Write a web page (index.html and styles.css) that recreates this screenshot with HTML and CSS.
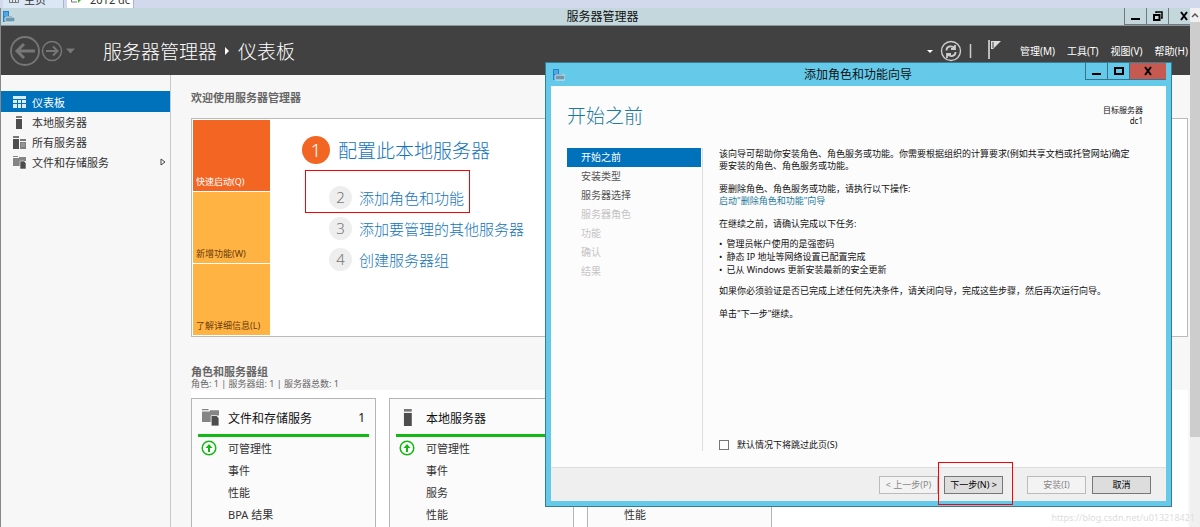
FILE: index.html
```html
<!DOCTYPE html>
<html lang="zh-CN">
<head>
  <meta charset="UTF-8" />
  <title>服务器管理器</title>
  <link rel="stylesheet" href="styles.css">
</head>
<body>

  <svg width="0" height="0" class="sprite">
    <symbol id="i-app" viewBox="0 0 12 12">
      <path d="M0 0h6v11H0z" fill="#1d84d0"/>
      <path d="M1 2h4M1 4h4" stroke="#8cc8f0"/>
      <path d="M5 5h4v2H5z" fill="#5b7f93"/>
      <rect x="2" y="6" width="10" height="5" rx="1" fill="#6f99af" stroke="#d8e8ef"/>
    </symbol>
    <symbol id="i-board" viewBox="0 0 13 12">
      <path d="M0 0h13v3H0zM0 4h4v3H0zM5 4h3v3H5zM9 4h4v3H9zM0 8h4v4H0zM5 8h3v4H5zM9 8h4v4H9z" fill="#d9ecf8"/>
    </symbol>
    <symbol id="i-server" viewBox="0 0 13 13">
      <path d="M3 0h6v2H3z" fill="#777"/>
      <path d="M3 3h6v10H3z" fill="#4d4d4d"/>
    </symbol>
    <symbol id="i-servers" viewBox="0 0 13 13">
      <path d="M0 0h6v2H0zM7 3h6v2H7z" fill="#777"/>
      <path d="M0 3h6v10H0z" fill="#4d4d4d"/>
      <path d="M7 6h6v7H7z" fill="#808080"/>
      <path d="M8 8h4M8 10h4" stroke="#aaa"/>
    </symbol>
    <symbol id="i-files" viewBox="0 0 13 13">
      <path d="M0 0h5v1H0zM0 2h6V1h7v4H8v5H0z" fill="#858585"/>
      <path d="M7 5h4l2 2v6H7z" fill="#4d4d4d" stroke="#f7f7f7" stroke-width=".6"/>
    </symbol>
    <symbol id="i-up" viewBox="0 0 16 16">
      <circle cx="8" cy="8" r="6.8" fill="#fff" stroke="#14b814" stroke-width="1.5"/>
      <path d="M8 12V6" stroke="#14b814" stroke-width="2"/>
      <path d="M8 4l3.500 4h-7z" fill="#14b814"/>
    </symbol>
  </svg>

  <div class="tabs">
    <div class="tab">
      <svg width="10" height="10" viewBox="0 0 10 10"><path d="M.5 0v9.500h9V0M3.500 0v9M6.500 0v9" fill="none" stroke="#777"/></svg>
      <span>主页</span>
    </div>
    <div class="tab active">
      <svg width="14" height="11" viewBox="0 0 14 11"><path d="M.5 0v10H6" fill="none" stroke="#777"/><path d="M7 0l6 5-6 6z" fill="#3cb52e"/></svg>
      <span>2012 dc</span>
    </div>
  </div>

  <div class="viewer">
    <div class="screen">
      <header class="titlebar">
        <svg class="app-icon" width="12" height="12"><use href="#i-app"/></svg>
        <span class="title">服务器管理器</span>
        <div class="win-buttons">
          <button aria-label="最小化"><svg width="10" height="10"><path d="M0 8h9" stroke="#000" stroke-width="2"/></svg></button>
          <button aria-label="还原"><svg width="10" height="10"><path d="M3 2V1h6v6H8" fill="none" stroke="#000" stroke-width="1.500"/><path d="M1 4h5.500v5H1z" fill="none" stroke="#000" stroke-width="2"/></svg></button>
          <button class="last" aria-label="关闭"><svg width="10" height="10"><path d="M2 1l6 8M8 1L2 9" stroke="#000" stroke-width="2"/></svg></button>
        </div>
      </header>

      <div class="toolbar">
        <svg class="back" width="66" height="30" viewBox="0 0 66 30" fill="none" stroke="#777">
          <circle cx="15" cy="15" r="14" stroke-width="1.800"/>
          <path d="M25 15H7M14 8l-7 7 7 7" stroke-width="3"/>
          <circle cx="42" cy="15" r="9.500" stroke-width="1.500"/>
          <path d="M36 15h11M43 10.500l4.500 4.500-4.500 4.500" stroke-width="2"/>
          <path d="M56 12.500h9l-4.500 5z" fill="#777" stroke="none"/>
        </svg>
        <div class="crumbs">
          <span>服务器管理器</span>
          <svg width="5" height="8"><path d="M0 0l4 4-4 4z" fill="#fff"/></svg>
          <span>仪表板</span>
        </div>
        <svg class="status" width="74" height="24" viewBox="0 0 74 24" fill="none">
          <path d="M0 11h6l-3 3z" fill="#fff"/>
          <circle cx="24" cy="12" r="9.500" stroke="#ccc" stroke-width="1.400"/>
          <path d="M19.500 11.500c0-5 6-5 8.500-2M28 6v4h-4M28.500 13c0 5-6 5-8.500 2M20 19v-4h4" stroke="#ccc" stroke-width="1.800"/>
          <path d="M43.500 5v14" stroke="#ccc" stroke-width="1.500"/>
          <path d="M61 1h2v19h-2z" fill="#bbb"/>
          <path d="M64 2h10l-8 8h-2z" fill="#ddd"/>
          <path d="M66 3v6" stroke="#414141"/>
        </svg>
        <nav class="menu">
          <a href="#">管理(M)</a>
          <a href="#">工具(T)</a>
          <a href="#">视图(V)</a>
          <a href="#">帮助(H)</a>
        </nav>
      </div>

      <div class="columns">
        <nav class="sidebar">
          <a href="#" class="selected"><svg width="13" height="12"><use href="#i-board"/></svg>仪表板</a>
          <a href="#"><svg width="13" height="13"><use href="#i-server"/></svg>本地服务器</a>
          <a href="#"><svg width="13" height="13"><use href="#i-servers"/></svg>所有服务器</a>
          <a href="#"><svg width="13" height="13"><use href="#i-files"/></svg>文件和存储服务
            <svg class="more" width="6" height="8"><path d="M1 1l4 3-4 3z" fill="none" stroke="#444"/></svg></a>
        </nav>

        <main>
          <h2>欢迎使用服务器管理器</h2>
          <section class="welcome">
            <div class="quick">
              <a href="#" class="start">快速启动(Q)</a>
              <a href="#">新增功能(W)</a>
              <a href="#">了解详细信息(L)</a>
            </div>
            <div class="steps">
              <a href="#" class="step first"><b>1</b>配置此本地服务器</a>
              <a href="#" class="step marked"><b>2</b>添加角色和功能</a>
              <a href="#" class="step"><b>3</b>添加要管理的其他服务器</a>
              <a href="#" class="step"><b>4</b>创建服务器组</a>
            </div>
          </section>

          <h2 class="groups-title">角色和服务器组</h2>
          <p class="counts">角色: 1 | 服务器组: 1 | 服务器总数: 1</p>
          <section class="tiles">
            <article class="tile">
              <h3><svg width="17" height="17"><use href="#i-files"/></svg>文件和存储服务<span>1</span></h3>
              <ul>
                <li><svg width="16" height="16"><use href="#i-up"/></svg>可管理性</li>
                <li>事件</li>
                <li>性能</li>
                <li>BPA 结果</li>
              </ul>
            </article>
            <article class="tile">
              <h3><svg width="17" height="17"><use href="#i-server"/></svg>本地服务器<span>1</span></h3>
              <ul>
                <li><svg width="16" height="16"><use href="#i-up"/></svg>可管理性</li>
                <li>事件</li>
                <li>服务</li>
                <li>性能</li>
              </ul>
            </article>
            <article class="tile">
              <h3><svg width="17" height="17"><use href="#i-servers"/></svg>所有服务器<span>1</span></h3>
              <ul>
                <li><svg width="16" height="16"><use href="#i-up"/></svg>可管理性</li>
                <li>事件</li>
                <li>服务</li>
                <li>性能</li>
              </ul>
            </article>
          </section>
        </main>
      </div>

      <div class="wizard" role="dialog" aria-labelledby="wizard-title">
        <header class="wizard-bar">
          <svg class="app-icon" width="12" height="12"><use href="#i-app"/></svg>
          <span class="title" id="wizard-title">添加角色和功能向导</span>
          <div class="win-buttons">
            <button aria-label="最小化"><svg width="10" height="10"><path d="M0 8h9" stroke="#000" stroke-width="2"/></svg></button>
            <button aria-label="最大化"><svg width="10" height="10"><path d="M1 2h8v6H1z" fill="none" stroke="#000" stroke-width="2"/></svg></button>
            <button class="close" aria-label="关闭"><svg width="10" height="10"><path d="M2 1l6 8M8 1L2 9" stroke="#000" stroke-width="2"/></svg></button>
          </div>
        </header>

        <div class="wizard-body">
          <div class="wizard-head">
            <h1>开始之前</h1>
            <p>目标服务器<br>dc1</p>
          </div>
          <div class="wizard-columns">
            <ol class="pages">
              <li class="current">开始之前</li>
              <li>安装类型</li>
              <li>服务器选择</li>
              <li class="off">服务器角色</li>
              <li class="off">功能</li>
              <li class="off">确认</li>
              <li class="off">结果</li>
            </ol>
            <div class="text">
              <p>该向导可帮助你安装角色、角色服务或功能。你需要根据组织的计算要求(例如共享文档或托管网站)确定<br>要安装的角色、角色服务或功能。</p>
              <p>要删除角色、角色服务或功能，请执行以下操作:<br><a href="#">启动"删除角色和功能"向导</a></p>
              <p>在继续之前，请确认完成以下任务:</p>
              <ul>
                <li>管理员帐户使用的是强密码</li>
                <li>静态 IP 地址等网络设置已配置完成</li>
                <li>已从 Windows 更新安装最新的安全更新</li>
              </ul>
              <p>如果你必须验证是否已完成上述任何先决条件，请关闭向导，完成这些步骤，然后再次运行向导。</p>
              <p>单击"下一步"继续。</p>
              <div class="skip">
                <input type="checkbox" id="skip">
                <label for="skip">默认情况下将跳过此页(S)</label>
              </div>
            </div>
          </div>
        </div>

        <footer class="actions">
          <button disabled>&lt; 上一步(P)</button>
          <div class="next"><button>下一步(N) &gt;</button></div>
          <button class="install" disabled>安装(I)</button>
          <button>取消</button>
        </footer>
      </div>
    </div>

    <div class="scrollbar">
      <svg width="10" height="14"><path d="M2 9l3-3 3 3" fill="none" stroke="#555" stroke-width="1.500"/></svg>
      <div class="thumb"></div>
    </div>
  </div>

  <div class="watermark">https://blog.csdn.net/u013218421</div>

</body>
</html>
```
FILE: styles.css
```css
* {
  box-sizing: border-box;
}

body {
  margin: 0;
  height: 100vh;
  overflow: hidden;
  display: flex;
  flex-direction: column;
  font-family: "Noto Sans", "Noto Sans CJK SC", sans-serif;
  font-size: 11px;
  color: #333;
  background-color: #fff;
}

h1, h2, h3, p, ul, ol {
  margin: 0;
  padding: 0;
}

ul, ol {
  list-style: none;
}

a {
  text-decoration: none;
  color: inherit;
}

button {
  font-family: inherit;
  padding: 0;
}

svg {
  flex: none;
}

.sprite {
  position: absolute;
}

/* tabs of the virtual machine viewer */
.tabs {
  flex: none;
  display: flex;
  height: 8px;
  padding-left: 3px;
  background-color: #d3d9ec;
  overflow: hidden;
}

.tab {
  display: flex;
  align-items: flex-end;
  gap: 5px;
  width: 61px;
  padding-left: 6px;
  padding-bottom: 5px;
  line-height: 12px;
  background-color: #dce7f5;
  border-right: 1px solid #a9b5cc;
}

.tab span {
  height: 9px;
}

.tab.active {
  width: 67px;
  margin-left: 3px;
  padding-left: 4px;
  background-color: #fff;
}

.viewer {
  flex: 1;
  min-height: 0;
  display: flex;
}

.screen {
  position: relative;
  flex: 1;
  min-width: 0;
  display: flex;
  flex-direction: column;
  border-left: 1px solid #888;
  overflow: hidden;
}

.titlebar {
  flex: none;
  display: flex;
  align-items: center;
  height: 18px;
  background-color: #c3d7dc;
  border-bottom: 1px solid #8b9799;
}

.app-icon {
  margin-left: 2px;
}

.title {
  flex: 1;
  padding-left: 66px;
  text-align: center;
  font-size: 12px;
  line-height: 18px;
  color: #111;
}

.win-buttons {
  display: flex;
  align-self: flex-start;
}

.win-buttons button {
  display: flex;
  align-items: center;
  justify-content: center;
  width: 22px;
  height: 17px;
  background: none;
  border: 1px solid #6d797c;
  border-width: 0 0 1px 1px;
}

.win-buttons .last {
  padding-left: 8px;
}

.toolbar {
  flex: none;
  display: flex;
  align-items: center;
  height: 49px;
  padding: 0 2px 0 9px;
  background-color: #414141;
  color: #fff;
}

.crumbs {
  flex: 1;
  display: flex;
  align-items: center;
  gap: 8px;
  margin-left: 27px;
  font-size: 19px;
  font-weight: 300;
}

.menu {
  display: flex;
  gap: 12px;
  margin-left: 19px;
  font-size: 10px;
}

.columns {
  flex: 1;
  min-height: 0;
  display: flex;
}

.sidebar {
  flex: none;
  width: 170px;
  padding-top: 16px;
  background-color: #f7f7f7;
  border-right: 1px solid #c8c8c8;
}

.sidebar a {
  display: flex;
  align-items: center;
  gap: 6px;
  height: 20px;
  padding: 0 4px 0 12px;
}

.sidebar .selected {
  height: 21px;
  background-color: #0072bc;
  color: #fff;
}

.more {
  margin-left: auto;
}

main {
  flex: 1;
  min-width: 0;
  padding: 13px 2px 0 20px;
  background-color: #f7f7f7;
}

h2 {
  font-size: 11px;
  line-height: 20px;
  font-weight: 700;
  color: #666;
}

.welcome {
  display: flex;
  margin-top: 10px;
  padding: 1px;
  background-color: #fff;
  border: 1px solid #bbb;
}

.quick {
  display: flex;
  flex-direction: column;
  gap: 1px;
  width: 77px;
}

.quick a {
  display: flex;
  align-items: flex-end;
  height: 71px;
  padding: 0 3px 3px;
  font-size: 9px;
  background-color: #ffb343;
  color: #6b3a0a;
}

.quick .start {
  background-color: #f26522;
  color: #fff;
}

.steps {
  display: flex;
  flex-direction: column;
  align-items: flex-start;
  padding: 10px 0 0 32px;
}

.step {
  position: relative;
  display: flex;
  align-items: center;
  gap: 7px;
  height: 31px;
  margin-left: 27px;
  font-size: 15px;
  font-weight: 300;
  color: #1474bb;
}

.step b {
  width: 23px;
  height: 23px;
  border-radius: 50%;
  text-align: center;
  line-height: 23px;
  font-weight: 300;
  background-color: #eee;
  color: #777;
}

.step.first {
  gap: 8px;
  height: 40px;
  margin: 0 0 12px;
  font-size: 19px;
}

.step.first b {
  width: 28px;
  height: 28px;
  line-height: 28px;
  background-color: #f26522;
  color: #fff;
}

/* red frames drawn over the steps to follow */
.step.marked::after,
.next::after {
  content: "";
  position: absolute;
  border: 1px solid #f00;
}

.step.marked::after {
  inset: -12px -6px 0 -24px;
}

.groups-title {
  margin-top: 25px;
}

.counts {
  margin-top: -4px;
  font-size: 9px;
  line-height: 12px;
  color: #666;
}

.tiles {
  display: flex;
  gap: 13px;
  padding-top: 8px;
  background-color: #fff;
}

.tile {
  width: 185px;
  height: 180px;
  padding: 0 6px;
  background-color: #fbfbfb;
  border: 1px solid #b5b5b5;
}

.tile h3 {
  display: flex;
  align-items: center;
  gap: 9px;
  height: 38px;
  padding: 2px 4px 0;
  font-size: 12px;
  font-weight: 400;
  color: #111;
  border-bottom: 3px solid #14b814;
}

.tile h3 span {
  margin-left: auto;
}

.tile li {
  display: flex;
  align-items: center;
  gap: 11px;
  height: 22px;
  padding-left: 30px;
}

.tile li:first-child {
  padding-left: 3px;
}

/* wizard window */
.wizard {
  position: absolute;
  top: 54px;
  left: 544px;
  right: 18px;
  padding: 0 5px 5px;
  background-color: #65caea;
  border: 1px solid #377d96;
}

.wizard-bar {
  display: flex;
  align-items: center;
  height: 23px;
}

.wizard-bar .win-buttons button {
  border-color: #35748a;
}

.wizard-bar .win-buttons .close {
  width: 37px;
  background-color: #c75a50;
}

.wizard-body {
  padding: 16px;
  background-color: #fcfcfc;
}

.wizard-head {
  display: flex;
  justify-content: space-between;
  height: 46px;
  padding-right: 7px;
}

h1 {
  font-size: 19px;
  line-height: 28px;
  font-weight: 300;
  color: #1c7a9c;
}

.wizard-head p {
  text-align: right;
  font-size: 8px;
  line-height: 11px;
  padding-top: 2px;
  color: #111;
}

.wizard-columns {
  display: flex;
  min-height: 303px;
}

.pages {
  flex: none;
  width: 136px;
  border-right: 1px solid #ddd;
}

.pages li {
  width: 134px;
  height: 19px;
  padding-left: 14px;
  font-size: 10px;
  line-height: 19px;
  color: #555;
}

.pages .current {
  background-color: #0072bc;
  color: #fff;
}

.pages .off {
  color: #c4c4c4;
}

.text {
  display: flex;
  flex-direction: column;
  flex: 1;
  padding-left: 16px;
  font-size: 9px;
  line-height: 12px;
  color: #111;
}

.text p {
  margin-bottom: 11px;
}

.text a {
  color: #1c7a9c;
}

.text ul {
  margin: -4px 0 9px;
  line-height: 13px;
}

.text li::before {
  content: "•";
  margin-right: 4px;
}

.skip {
  display: flex;
  align-items: center;
  gap: 8px;
  margin-top: auto;
}

.skip input {
  appearance: none;
  width: 10px;
  height: 10px;
  margin: 0;
  background-color: #fff;
  border: 1px solid #777;
}

.actions {
  display: flex;
  align-items: center;
  justify-content: flex-end;
  gap: 6px;
  height: 34px;
  padding-right: 15px;
  background-color: #efefef;
  border-top: 1px solid #ddd;
}

.actions button {
  width: 59px;
  height: 18px;
  font-size: 9px;
  line-height: 16px;
  color: #000;
  background-color: #ddd;
  border: 1px solid #777;
}

.actions button:disabled {
  color: #888;
  background-color: #f3f3f3;
  border-color: #bbb;
}

.actions .install {
  margin-left: 18px;
}

.next {
  position: relative;
  display: flex;
}

.next::after {
  inset: -14px -10px -11px -6px;
}

/* scrollbar of the viewer */
.scrollbar {
  display: flex;
  flex-direction: column;
  width: 10px;
  background-color: #f0f0f0;
}

.thumb {
  height: 80%;
  background-color: #cdcdcd;
}

.watermark {
  position: absolute;
  right: 5px;
  bottom: 3px;
  font-size: 9px;
  color: #ddd;
}
```
